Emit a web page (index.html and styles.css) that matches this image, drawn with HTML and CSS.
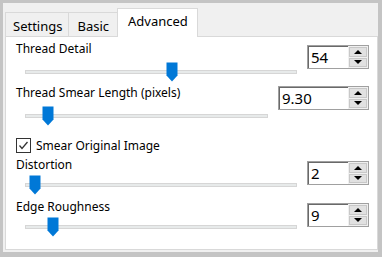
FILE: index.html
```html
<!DOCTYPE html>
<html>
<head>
<meta charset="utf-8">
<link rel="stylesheet" href="styles.css">
</head>
<body>
<div class="frame">
  <div class="tabs">
    <div class="tab">Settings</div>
    <div class="tab basic">Basic</div>
    <div class="tab active">Advanced</div>
  </div>
  <div class="panel">
    <div class="section s1">
      <div class="left">
        <div class="label">Thread Detail</div>
        <div class="slider"><div class="track"></div><svg class="thumb" style="left:141px" width="12" height="20" viewBox="0 0 12 20"><path d="M0.5 0.5H11.5V13.5L6 19.5L0.5 13.5Z" fill="#0078d7"/></svg></div>
      </div>
      <div class="spin"><div class="input">54</div><div class="btns"><div class="btn"><span class="up"></span></div><div class="btn"><span class="down"></span></div></div></div>
    </div>
    <div class="section s2">
      <div class="left">
        <div class="label">Thread Smear Length (pixels)</div>
        <div class="slider"><div class="track"></div><svg class="thumb" style="left:17px" width="12" height="20" viewBox="0 0 12 20"><path d="M0.5 0.5H11.5V13.5L6 19.5L0.5 13.5Z" fill="#0078d7"/></svg></div>
      </div>
      <div class="spin wide"><div class="input">9.30</div><div class="btns"><div class="btn"><span class="up"></span></div><div class="btn"><span class="down"></span></div></div></div>
    </div>
    <div class="check">
      <span class="box"><svg width="13" height="13" viewBox="0 0 13 13"><path d="M2.5 6.5L5 9.5L10.5 3" fill="none" stroke="#333" stroke-width="1.3"/></svg></span>
      <span>Smear Original Image</span>
    </div>
    <div class="section s3">
      <div class="left">
        <div class="label">Distortion</div>
        <div class="slider"><div class="track"></div><svg class="thumb" style="left:4px" width="12" height="20" viewBox="0 0 12 20"><path d="M0.5 0.5H11.5V13.5L6 19.5L0.5 13.5Z" fill="#0078d7"/></svg></div>
      </div>
      <div class="spin"><div class="input">2</div><div class="btns"><div class="btn"><span class="up"></span></div><div class="btn"><span class="down"></span></div></div></div>
    </div>
    <div class="section s4">
      <div class="left">
        <div class="label">Edge Roughness</div>
        <div class="slider"><div class="track"></div><svg class="thumb" style="left:22px" width="12" height="20" viewBox="0 0 12 20"><path d="M0.5 0.5H11.5V13.5L6 19.5L0.5 13.5Z" fill="#0078d7"/></svg></div>
      </div>
      <div class="spin"><div class="input">9</div><div class="btns"><div class="btn"><span class="up"></span></div><div class="btn"><span class="down"></span></div></div></div>
    </div>
  </div>
</div>
</body>
</html>
```

FILE: styles.css
```css
html, body {
  margin: 0;
  padding: 0;
  background: #c4c4c4;
}
body {
  width: 382px;
  height: 257px;
  padding: 3px 4px 5px 3px;
  box-sizing: border-box;
  font-family: "Noto Sans", "Open Sans", sans-serif;
  font-size: 12px;
  color: #000;
}
.frame {
  background: #f0f0f0;
  height: 100%;
  padding: 4px 0 2px 2px;
  box-sizing: border-box;
  display: flex;
  flex-direction: column;
}
.tabs {
  display: flex;
  align-items: flex-end;
  height: 29px;
  position: relative;
  z-index: 1;
}
.tab {
  height: 24px;
  box-sizing: border-box;
  border: 1px solid #d9d9d9;
  border-bottom: none;
  border-right: none;
  padding: 4px 6px 0 7px;
  background: #f0f0f0;
  line-height: 18px;
  font-size: 13px;
}
.tab.basic {
  padding: 4px 8px 0 8px;
}
.tab.active {
  height: 29px;
  background: #fff;
  border-right: 1px solid #d9d9d9;
  padding: 3px 9px 0 10px;
  margin-bottom: -1px;
}
.panel {
  flex: 1;
  background: #fff;
  border: 1px solid #d9d9d9;
  padding: 4px 8px 0 10px;
  margin-right: 0;
}
.section {
  display: flex;
  align-items: flex-start;
}
.left {
  flex: 1;
  display: flex;
  flex-direction: column;
}
.label {
  line-height: 16px;
  height: 16px;
  white-space: nowrap;
}
.slider {
  position: relative;
  height: 22px;
  margin-top: 4px;
  margin-left: 9px;
}
.track {
  position: absolute;
  left: 0;
  right: 0;
  top: 9px;
  height: 4px;
  background: #e7eaea;
  border: 1px solid #d6d6d6;
  box-sizing: border-box;
}
.thumb {
  position: absolute;
  top: 1px;
}
.spin {
  display: flex;
  margin-left: 10px;
  margin-top: 4px;
  height: 24px;
  width: 62px;
  border: 1px solid #a0a0a0;
  box-sizing: border-box;
}
.spin.wide {
  width: 91px;
  margin-top: 1px;
}
.input {
  flex: 1;
  border-top: 1px solid #696969;
  border-left: 1px solid #696969;
  padding-left: 2px;
  font-size: 15px;
  line-height: 21px;
  background: #fff;
}
.btns {
  width: 20px;
  display: flex;
  flex-direction: column;
  gap: 1px;
  background: #f0f0f0;
  padding: 1px 1px 1px 1px;
  box-sizing: border-box;
}
.btn {
  flex: 1;
  background: #e1e1e1;
  border: 1px solid #c8c8c8;
  display: flex;
  align-items: center;
  justify-content: center;
}
.up {
  width: 0; height: 0;
  border-left: 4px solid transparent;
  border-right: 4px solid transparent;
  border-bottom: 4px solid #000;
}
.down {
  width: 0; height: 0;
  border-left: 4px solid transparent;
  border-right: 4px solid transparent;
  border-top: 4px solid #000;
}
.s2 { margin-top: 2px; }
.check {
  display: flex;
  align-items: center;
  gap: 5px;
  height: 18px;
  margin-top: 9px;
}
.box {
  width: 13px;
  height: 13px;
  border: 1px solid #333;
  display: flex;
  background: #fff;
}
.s3 { margin-top: 3px; }
.s3 .slider { margin-top: 1px; }
.s4 { margin-top: 3px; }
.s4 .slider { margin-top: 1px; }
```
